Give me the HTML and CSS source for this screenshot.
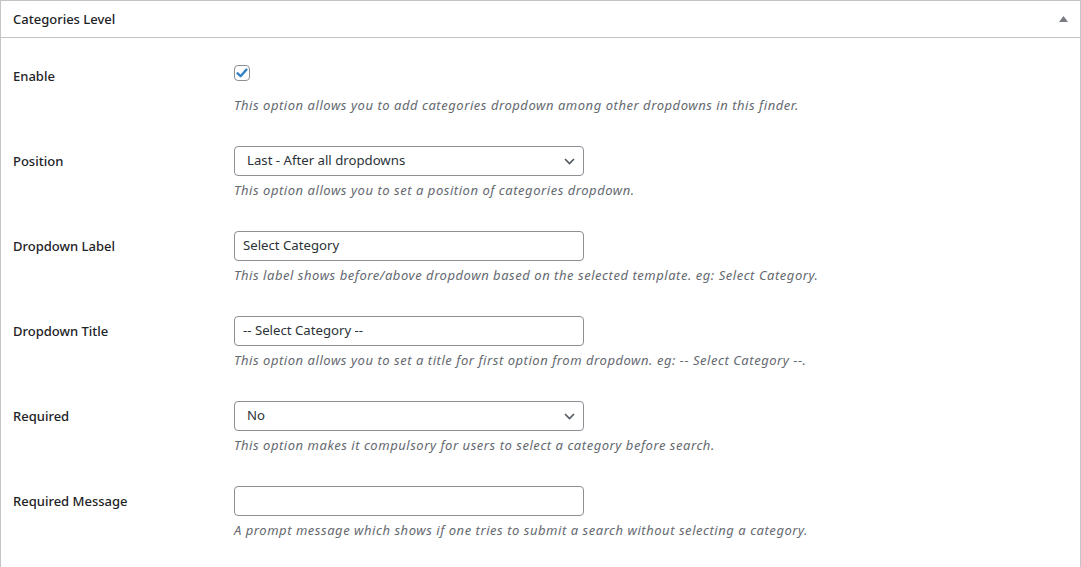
FILE: index.html
```html
<!DOCTYPE html>
<html lang="en">
<head>
<meta charset="utf-8">
<title>Categories Level</title>
<link rel="stylesheet" href="styles.css">
</head>
<body>
<div class="postbox">
  <div class="postbox-header">
    <h2 class="postbox-title">Categories Level</h2>
    <button class="toggle" type="button" aria-label="Toggle panel">
      <svg width="9" height="6" viewBox="0 0 9 6"><polygon points="4.5,0 9,6 0,6" fill="#787c82"/></svg>
    </button>
  </div>
  <div class="inside">
    <div class="row">
      <div class="label">Enable</div>
      <div class="field">
        <div class="control control-check">
          <span class="checkbox">
            <svg width="14" height="14" viewBox="0 0 14 14"><path d="M2.6 7.3 L5.6 10.2 L11.4 3.6" fill="none" stroke="#3582c4" stroke-width="2.4" stroke-linecap="round" stroke-linejoin="round"/></svg>
          </span>
        </div>
        <p class="desc">This option allows you to add categories dropdown among other dropdowns in this finder.</p>
      </div>
    </div>
    <div class="row">
      <div class="label">Position</div>
      <div class="field">
        <div class="control select">
          <span class="select-text">Last - After all dropdowns</span>
          <svg class="chev" width="11" height="7" viewBox="0 0 11 7"><path d="M1 1 L5.5 5.5 L10 1" fill="none" stroke="#50575e" stroke-width="1.6"/></svg>
        </div>
        <p class="desc">This option allows you to set a position of categories dropdown.</p>
      </div>
    </div>
    <div class="row">
      <div class="label">Dropdown Label</div>
      <div class="field">
        <div class="control input">Select Category</div>
        <p class="desc">This label shows before/above dropdown based on the selected template. eg: Select Category.</p>
      </div>
    </div>
    <div class="row">
      <div class="label">Dropdown Title</div>
      <div class="field">
        <div class="control input">-- Select Category --</div>
        <p class="desc">This option allows you to set a title for first option from dropdown. eg: -- Select Category --.</p>
      </div>
    </div>
    <div class="row">
      <div class="label">Required</div>
      <div class="field">
        <div class="control select">
          <span class="select-text">No</span>
          <svg class="chev" width="11" height="7" viewBox="0 0 11 7"><path d="M1 1 L5.5 5.5 L10 1" fill="none" stroke="#50575e" stroke-width="1.6"/></svg>
        </div>
        <p class="desc">This option makes it compulsory for users to select a category before search.</p>
      </div>
    </div>
    <div class="row">
      <div class="label">Required Message</div>
      <div class="field">
        <div class="control input"></div>
        <p class="desc">A prompt message which shows if one tries to submit a search without selecting a category.</p>
      </div>
    </div>
  </div>
</div>
</body>
</html>
```
FILE: styles.css
```css
html, body {
  margin: 0;
  padding: 0;
  background: #ffffff;
}
body {
  font-family: "Noto Sans", "Open Sans", sans-serif;
  color: #1d2327;
  font-size: 13px;
}
.postbox {
  border: 1px solid #c3c4c7;
  border-bottom: none;
  background: #fff;
  width: 1081px;
  box-sizing: border-box;
  height: 567px;
}
.postbox-header {
  display: flex;
  align-items: center;
  justify-content: space-between;
  height: 36px;
  border-bottom: 1px solid #c3c4c7;
}
.postbox-title {
  margin: 0;
  padding-left: 12px;
  font-size: 13px;
  font-weight: 500;
  line-height: 1.4;
  color: #1d2327;
}
.toggle {
  border: 0;
  background: none;
  padding: 0;
  margin-right: 12px;
  width: 9px;
  height: 6px;
  display: flex;
  margin-top: -1px;
}
.inside {
  padding: 8px 0 0 12px;
}
.row {
  display: flex;
  height: 85px;
}
.label {
  width: 221px;
  flex: none;
  padding-top: 21px;
  font-size: 13px;
  font-weight: 500;
  line-height: 18px;
  color: #1d2327;
}
.field {
  padding-top: 15px;
}
.control {
  box-sizing: border-box;
  width: 350px;
  height: 30px;
}
.control-check {
  padding-top: 4px;
}
.checkbox {
  box-sizing: border-box;
  display: flex;
  align-items: center;
  justify-content: center;
  width: 16px;
  height: 16px;
  border: 1px solid #8c8f94;
  border-radius: 4px;
  background: #fff;
}
.input, .select {
  border: 1px solid #8c8f94;
  border-radius: 4px;
  background: #fff;
  display: flex;
  align-items: center;
  font-size: 13.2px;
  color: #2c3338;
  line-height: 1;
}
.input {
  padding: 0 8px;
}
.select {
  padding: 0 8px 0 12px;
  justify-content: space-between;
}
.chev {
  margin-top: 1px;
}
.desc {
  margin: 5px 0 0;
  font-size: 13px;
  letter-spacing: 0.54px;
  font-style: italic;
  line-height: 19.5px;
  color: #646970;
  white-space: nowrap;
}
```
